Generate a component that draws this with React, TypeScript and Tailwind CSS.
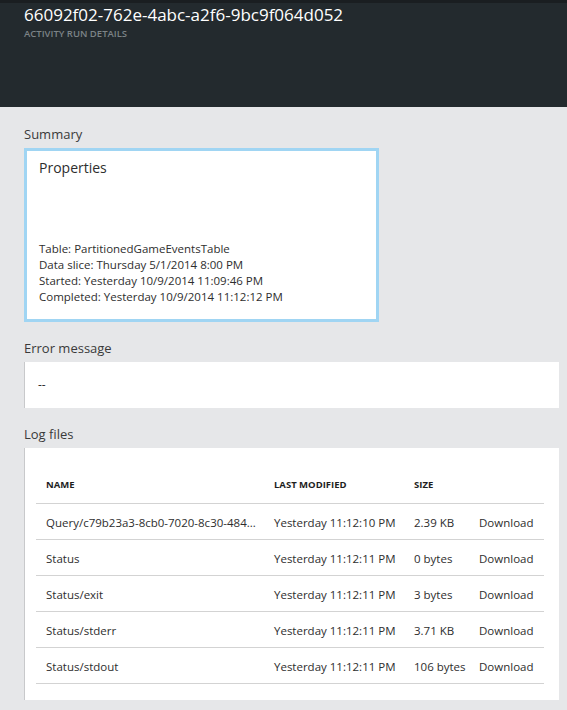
const rows = [
  { name: "Query/c79b23a3-8cb0-7020-8c30-484...", modified: "Yesterday 11:12:10 PM", size: "2.39 KB" },
  { name: "Status", modified: "Yesterday 11:12:11 PM", size: "0 bytes" },
  { name: "Status/exit", modified: "Yesterday 11:12:11 PM", size: "3 bytes" },
  { name: "Status/stderr", modified: "Yesterday 11:12:11 PM", size: "3.71 KB" },
  { name: "Status/stdout", modified: "Yesterday 11:12:11 PM", size: "106 bytes" },
];

function SectionLabel({ children }: { children: string }) {
  return <div className="text-[13px] leading-[16px] text-[#3a3a3a] mb-[6px]">{children}</div>;
}

export default function App() {
  return (
    <div className="w-[567px] h-[710px] bg-[#e6e7e9] overflow-hidden font-['Segoe_UI','Open_Sans',sans-serif] text-[#2e2e2e]">
      {/* blade header */}
      <div className="h-[3px] bg-[#1a1e21]" />
      <div className="h-[104px] bg-[#232a2e] px-[24px] pt-[1px]">
        <div className="text-[17px] leading-[22px] text-white">66092f02-762e-4abc-a2f6-9bc9f064d052</div>
        <div className="mt-[2px] text-[9.5px] leading-[12px] font-semibold text-[#7c8387] uppercase">
          Activity run details
        </div>
      </div>

      <div className="pl-[24px] pr-[8px] pt-[19px]">
        <SectionLabel>Summary</SectionLabel>
        <div className="w-[355px] h-[174px] bg-white border-[3px] border-[#a0d5f3] px-[12px] pt-[8px] flex flex-col">
          <div className="text-[14px] leading-[18px]">Properties</div>
          <div className="mt-auto mb-[14px] text-[11.5px] leading-[16px]">
            <div>Table: PartitionedGameEventsTable</div>
            <div>Data slice: Thursday 5/1/2014 8:00 PM</div>
            <div>Started: Yesterday 10/9/2014 11:09:46 PM</div>
            <div>Completed: Yesterday 10/9/2014 11:12:12 PM</div>
          </div>
        </div>

        <div className="mt-[18px]">
          <SectionLabel>Error message</SectionLabel>
          <div className="h-[46px] bg-white border-l border-[#c8c9cb] pl-[13px] flex items-center text-[12px]">--</div>
        </div>

        <div className="mt-[18px]">
          <SectionLabel>Log files</SectionLabel>
          <div className="h-[252px] bg-white border-l border-[#c8c9cb] pl-[11px] pr-[15px] pt-[24px]">
            <div className="flex items-center h-[32px] pb-[5px] border-b border-[#d3d3d3] pl-[10px] text-[9.5px] font-bold text-[#1e1e1e] uppercase">
              <div className="w-[228px]">Name</div>
              <div className="w-[140px]">Last modified</div>
              <div className="w-[65px]">Size</div>
            </div>
            {rows.map((r) => (
              <div key={r.name} className="flex items-center h-[36px] pt-[2px] border-b border-[#d3d3d3] pl-[10px] text-[11.5px] whitespace-nowrap">
                <div className="w-[228px]">{r.name}</div>
                <div className="w-[140px]">{r.modified}</div>
                <div className="w-[65px]">{r.size}</div>
                <div>Download</div>
              </div>
            ))}
          </div>
        </div>
      </div>
    </div>
  );
}
